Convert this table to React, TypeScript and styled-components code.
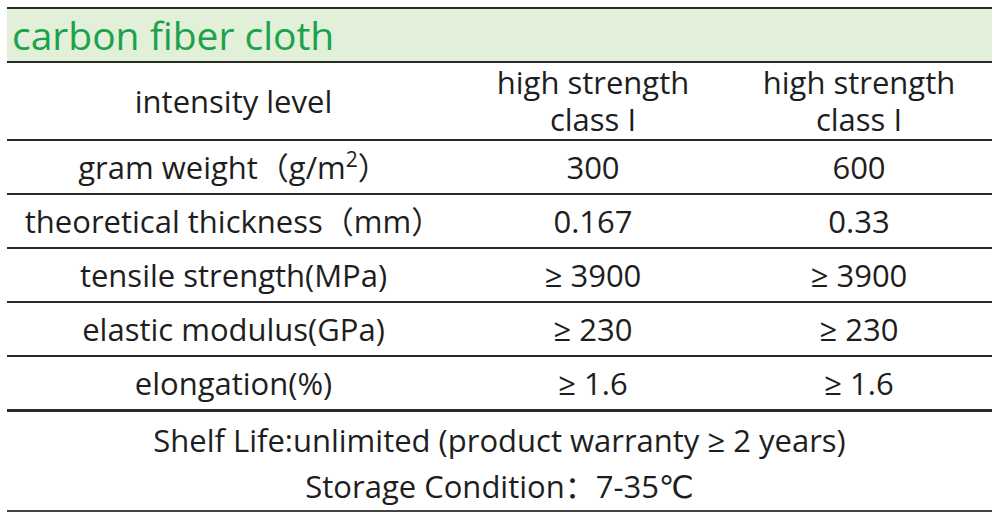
import styled, {createGlobalStyle} from "styled-components";
import type {ReactNode} from "react";

const rows = [
    {label: <>gram weight（g/m<sup>2</sup>）</>, a: "300", b: "600"},
    {label: <>theoretical thickness（mm）</>, a: "0.167", b: "0.33"},
    {label: <>tensile strength(MPa)</>, a: "≥ 3900", b: "≥ 3900"},
    {label: <>elastic modulus(GPa)</>, a: "≥ 230", b: "≥ 230"},
    {label: <>elongation(%)</>, a: "≥ 1.6", b: "≥ 1.6"},
]

const Cell = ({children}: { children: ReactNode }) => (
    <CellBox><span>{children}</span></CellBox>
)

export default function App() {
    return (
        <>
            <GlobalStyle/>
            <Sheet>
                <Title>carbon fiber cloth</Title>
                <Row $height={76}>
                    <Cell>intensity level</Cell>
                    <Cell>high strength<br/>class I</Cell>
                    <Cell>high strength<br/>class I</Cell>
                </Row>
                {rows.map((r, i) => (
                    <Row key={i} $height={52} $border={i === rows.length - 1 ? 3 : 2}>
                        <Cell>{r.label}</Cell>
                        <Cell>{r.a}</Cell>
                        <Cell>{r.b}</Cell>
                    </Row>
                ))}
                <Footer>
                    <div>Shelf Life:unlimited (product warranty ≥ 2 years)</div>
                    <div>Storage Condition：7-35℃</div>
                </Footer>
            </Sheet>
        </>
    )
}

const GlobalStyle = createGlobalStyle`
  body {
    margin: 0;
    background: #fff;
    font-family: "Open Sans", "DejaVu Sans", "Noto Sans CJK SC", sans-serif;
    color: #1e1e1e;
  }
`

const Sheet = styled.div`
  width: 985px;
  margin: 7px 0 0 7px;
  border-top: 2px solid #2a2a2a;
`

const Title = styled.div`
  height: 52px;
  background: #e2efd9;
  color: #1aa34a;
  font-size: 39px;
  line-height: 52px;
  padding-left: 5px;
  border-bottom: 2px solid #2a2a2a;
`

const Row = styled.div<{ $height: number; $border?: number }>`
  display: grid;
  grid-template-columns: 453px 266px 1fr;
  height: ${p => p.$height}px;
  border-bottom: ${p => p.$border ?? 2}px solid #2a2a2a;
  font-size: 31px;
  line-height: 37px;
`

const CellBox = styled.div`
  display: flex;
  align-items: center;
  justify-content: center;
  text-align: center;
  white-space: nowrap;

  sup {
    font-size: 21px;
    line-height: 0;
    vertical-align: 12px;
  }
`

const Footer = styled.div`
  height: 100px;
  padding-top: 5px;
  box-sizing: border-box;
  border-bottom: 2px solid #444;
  text-align: center;
  font-size: 31px;
  line-height: 46px;
`
